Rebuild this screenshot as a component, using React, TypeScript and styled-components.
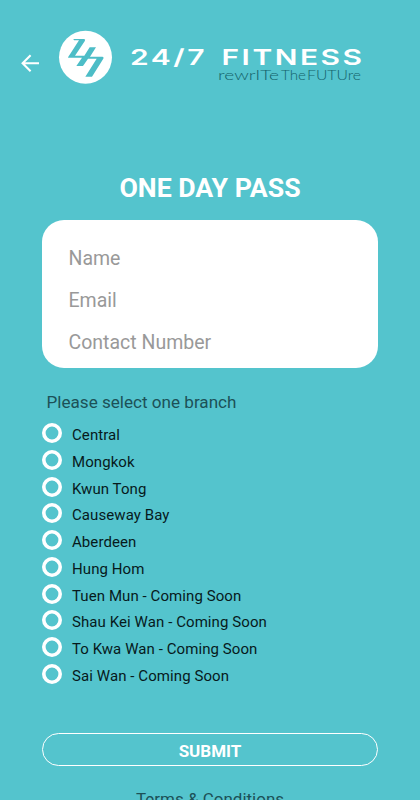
import React from "react";
import styled, { createGlobalStyle } from "styled-components";

const GlobalStyle = createGlobalStyle`
  * { box-sizing: border-box; }
  html, body { margin: 0; padding: 0; height: 100%; overflow: hidden; background: #54c4cd; }
  body { font-family: Roboto, sans-serif; }
`;

const Screen = styled.main`
  height: 800px;
  overflow: hidden;
  display: flex;
  flex-direction: column;
  padding: 0 42px;
  background: #54c4cd;
`;

const Header = styled.header`
  display: flex;
  flex: none;
  height: 171px;
  margin: 0 -42px;
  padding: 28px 0 0 20px;
`;

const BackButton = styled.button`
  display: flex;
  width: 20px;
  height: 20px;
  margin: 25px 18px 0 0;
  padding: 0;
  border: 0;
  background: none;
`;

const Title = styled.h1`
  flex: none;
  margin: 0 0 14px;
  font-size: 26.7px;
  line-height: 35px;
  font-weight: 700;
  text-align: center;
  color: #fff;
`;

const Card = styled.div`
  flex: none;
  display: flex;
  flex-direction: column;
  height: 148px;
  padding: 17px 26.5px 0;
  border-radius: 22px;
  background: #fff;
`;

const Field = styled.input`
  flex: none;
  height: 42px;
  width: 100%;
  padding: 0;
  border: 0;
  outline: 0;
  background: none;
  font: 400 19.5px Roboto, sans-serif;
  &::placeholder { color: #999; opacity: 1; }
`;

const Prompt = styled.p`
  flex: none;
  margin: 22px 0 9px 4.5px;
  font-size: 17.1px;
  line-height: 24px;
  color: #1c5157;
`;

const BranchList = styled.div`
  flex: none;
  display: flex;
  flex-direction: column;
`;

const Branch = styled.label`
  display: flex;
  align-items: flex-start;
  gap: 10px;
  height: 26.75px;
  font-size: 15px;
  line-height: 24px;
  letter-spacing: 0.08px;
  color: #071a1c;
`;

const Radio = styled.input`
  appearance: none;
  flex: none;
  width: 20px;
  height: 20px;
  margin: 0;
  border-radius: 50%;
  box-shadow: inset 0 0 0 3.6px #fff;
`;

const Submit = styled.button`
  flex: none;
  height: 33px;
  margin-top: 42.5px;
  padding: 3px 0 0;
  border: 1px solid #fff;
  border-radius: 16.5px;
  background: none;
  font: 700 17px Roboto, sans-serif;
  color: #fff;
`;

const Terms = styled.a`
  flex: none;
  margin-top: 21px;
  font-size: 17px;
  line-height: 24px;
  text-align: center;
  color: #1c5157;
`;

const Wordmark = styled.text`
  font: 600 21.5px Inter, sans-serif;
  letter-spacing: 1.8px;
  fill: #fff;
`;

const Tagline = styled.text`
  font: 300 13px Lato, sans-serif;
  fill: #14636b;
`;

const branches = [
  "Central",
  "Mongkok",
  "Kwun Tong",
  "Causeway Bay",
  "Aberdeen",
  "Hung Hom",
  "Tuen Mun - Coming Soon",
  "Shau Kei Wan - Coming Soon",
  "To Kwa Wan - Coming Soon",
  "Sai Wan - Coming Soon",
];

const BackArrow = () => (
  <svg width="20" height="20" viewBox="0 0 20 20" fill="none" stroke="#fff" strokeWidth="2.1">
    <path d="M19 10.3H3M10.6 2.3L2.6 10.3L10.6 18.3" />
  </svg>
);

const Logo = () => (
  <svg width="310" height="60" viewBox="58 28 310 60">
    <circle cx="85.5" cy="57.3" r="26.5" fill="#fff" />
    <path
      transform="translate(55 28) scale(0.33333)"
      fill="#4dbdc7"
      d="M55 33H86Q93 33 89 40L60 83H88L104 58H123L105 86H142Q148 87 144 94L111 146H91L125 92H99L84 114H64L81 89H39Q40 85 44 80L72 37H57Z"
    />
    <Wordmark x="130" y="65.2" textLength="77" lengthAdjust="spacingAndGlyphs">24/7</Wordmark>
    <Wordmark x="221.5" y="65.2" textLength="143" lengthAdjust="spacingAndGlyphs">FITNESS</Wordmark>
    <Tagline x="218" y="80" textLength="61" lengthAdjust="spacingAndGlyphs">rewrITe</Tagline>
    <Tagline x="281" y="80" textLength="25" lengthAdjust="spacingAndGlyphs">The</Tagline>
    <Tagline x="307" y="80" textLength="54" lengthAdjust="spacingAndGlyphs">FUTUre</Tagline>
  </svg>
);

export default function App() {
  return (
    <>
      <GlobalStyle />
      <Screen>
        <Header>
          <BackButton aria-label="Back"><BackArrow /></BackButton>
          <Logo />
        </Header>
        <Title>ONE DAY PASS</Title>
        <Card>
          <Field placeholder="Name" />
          <Field placeholder="Email" />
          <Field placeholder="Contact Number" />
        </Card>
        <Prompt>Please select one branch</Prompt>
        <BranchList>
          {branches.map((name) => (
            <Branch key={name}>
              <Radio type="radio" name="branch" />
              {name}
            </Branch>
          ))}
        </BranchList>
        <Submit>SUBMIT</Submit>
        <Terms>Terms &amp; Conditions</Terms>
      </Screen>
    </>
  );
}
